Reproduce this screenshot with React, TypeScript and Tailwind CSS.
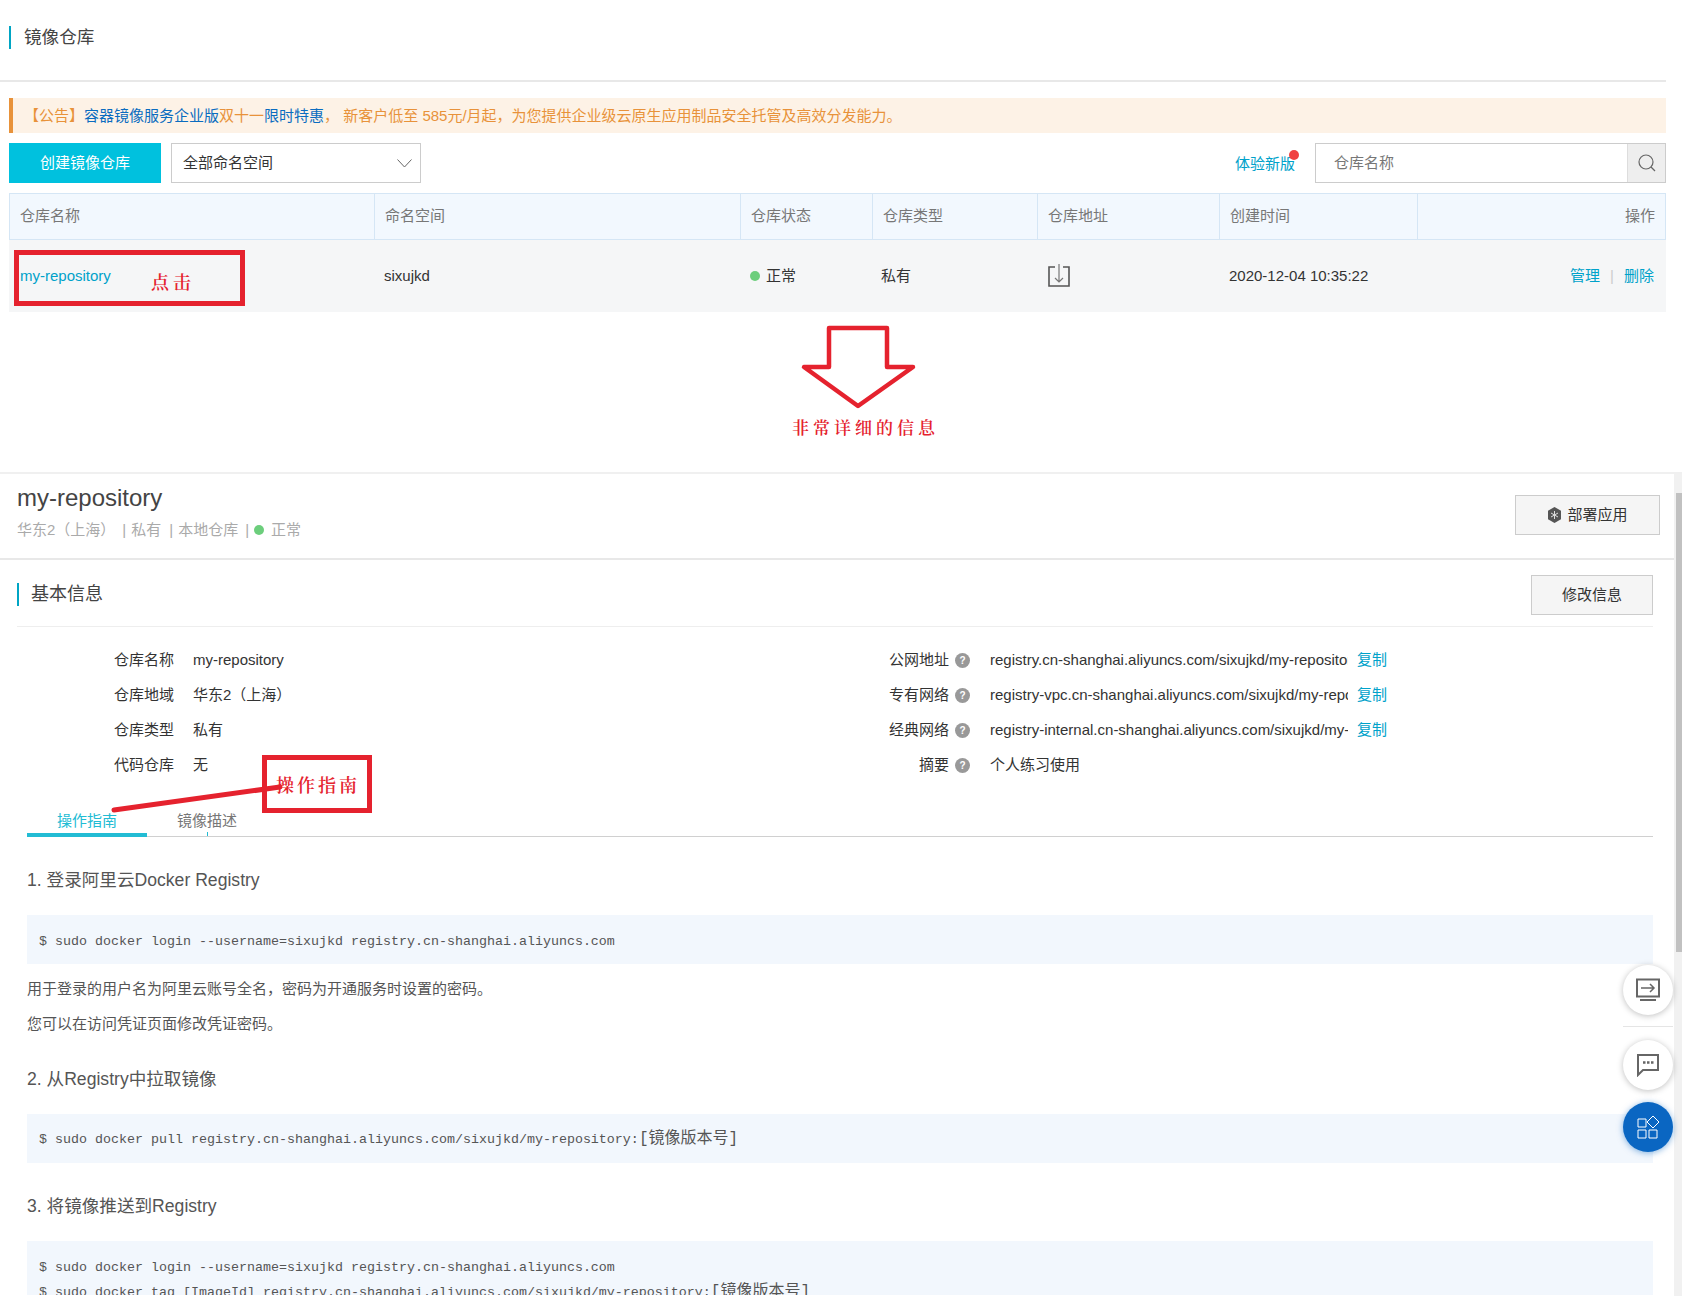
const sans = "font-['Liberation_Sans','Noto_Sans_CJK_SC',sans-serif]";

function HelpIcon() {
  return (
    <span className="flex h-[15px] w-[15px] items-center justify-center rounded-full bg-[#999] text-[10px] font-bold leading-none text-white">?</span>
  );
}

function InfoRow({ label, value, help, copy }: { label: string; value: string; help?: boolean; copy?: boolean }) {
  if (help) {
    return (
      <div className="flex h-[35px] items-center">
        <span className="w-[89px] text-right">{label}</span>
        <span className="ml-[6px] mr-[20px]"><HelpIcon /></span>
        <span className="w-[358px] overflow-hidden whitespace-nowrap">{value}</span>
        {copy && <span className="ml-[9px] text-[#00a2ca]">复制</span>}
      </div>
    );
  }
  return (
    <div className="flex h-[35px] items-center">
      <span className="w-[60px] text-right">{label}</span>
      <span className="ml-[19px]">{value}</span>
    </div>
  );
}

function Code({ children, className }: { children: React.ReactNode; className: string }) {
  return (
    <div className={`mt-[21px] overflow-hidden bg-[#f2f7fd] pl-[12px] font-['Liberation_Mono','Noto_Sans_CJK_SC',monospace] text-[13.33px] leading-[25px] text-[#555] ${className}`}>
      {children}
    </div>
  );
}

function Annotation({ children, className }: { children: React.ReactNode; className: string }) {
  return (
    <span className={`absolute font-['Liberation_Serif','Noto_Serif_CJK_SC',serif] font-semibold text-[#e5222e] ${className}`}>{children}</span>
  );
}

const columns = [
  { name: "仓库名称", w: "w-[365px]" },
  { name: "命名空间", w: "w-[366px]" },
  { name: "仓库状态", w: "w-[132px]" },
  { name: "仓库类型", w: "w-[165px]" },
  { name: "仓库地址", w: "w-[182px]" },
  { name: "创建时间", w: "w-[198px]" },
];

const tagText = "text-[16px]";

export default function App() {
  return (
    <div className={`relative h-[1310px] w-[1682px] overflow-hidden bg-white text-[15px] text-[#333] ${sans}`}>
      {/* Upper screenshot: repository list */}
      <div className="h-[472px] w-[1666px]">
        <div className="flex h-[82px] border-b-2 border-[#e8e8e8] pl-[9px] pt-[26px]">
          <div className="flex h-[23px] items-center border-l-2 border-[#00a5c4] pl-[13px] text-[17.6px] text-[#444]">镜像仓库</div>
        </div>

        <div className="ml-[9px] mt-[16px] flex h-[35px] items-center whitespace-nowrap border-l-4 border-[#e8923a] bg-[#fdf2e6] pl-[11px] pt-[1px] text-[#e8923a]">
          【公告】<span className="text-[#0a6cc0]">容器镜像服务企业版</span>双十一<span className="text-[#0a6cc0]">限时特惠</span>，&nbsp;新客户低至 585元/月起，为您提供企业级云原生应用制品安全托管及高效分发能力。
        </div>

        <div className="ml-[9px] mt-[10px] flex h-[40px] items-center">
          <div className="flex h-full w-[152px] items-center justify-center bg-[#00c1de] text-white">创建镜像仓库</div>
          <div className="ml-[10px] flex h-full w-[250px] items-center justify-between border border-[#ccc] pl-[11px] pr-[8px]">
            全部命名空间
            <svg width="15" height="9" viewBox="0 0 15 9" fill="none" stroke="#666" strokeWidth="1"><path d="M.5.5l7 7.5 7-7.5" /></svg>
          </div>
          <div className="relative ml-auto mr-[20px] pt-[2px] text-[#00a2ca]">
            体验新版
            <span className="absolute -right-[4px] -top-[1px] h-[10px] w-[10px] rounded-full bg-[#f04040]" />
          </div>
          <div className="flex h-full w-[351px] items-center border border-[#ccc]">
            <span className="flex-1 pl-[18px] text-[#777]">仓库名称</span>
            <span className="flex h-full w-[38px] items-center justify-center border-l border-[#ddd] bg-[#eee]">
              <svg width="20" height="20" viewBox="0 0 20 20" fill="none" stroke="#666" strokeWidth="1.2"><circle cx="9" cy="9" r="7" /><path d="M14 14l4 4" /></svg>
            </span>
          </div>
        </div>

        <div className="ml-[9px] mt-[10px] flex h-[47px] border border-[#d5e6f5] bg-[#f2f8fe] text-[#777]">
          {columns.map((c) => (
            <div key={c.name} className={`flex items-center border-r border-[#d5e6f5] pl-[10px] ${c.w}`}>{c.name}</div>
          ))}
          <div className="flex flex-1 items-center justify-end pr-[10px]">操作</div>
        </div>

        <div className="ml-[9px] flex h-[72px] items-center bg-[#f5f6f7]">
          <div className="w-[365px] pl-[11px] text-[#00a2ca]">my-repository</div>
          <div className="w-[366px] pl-[10px]">sixujkd</div>
          <div className="flex w-[132px] items-center pl-[10px]">
            <span className="mr-[6px] h-[10px] w-[10px] rounded-full bg-[#6cce7c]" />正常
          </div>
          <div className="w-[165px] pl-[9px]">私有</div>
          <div className="mb-[2px] w-[182px] pl-[11px]">
            <svg width="22" height="24" viewBox="0 0 22 24" fill="none" stroke="#555" strokeWidth="1.6">
              <path d="M7 4H1v19h20V4h-6" />
              <path d="M11 1v18M7 15l4 4 4-4" stroke="#777" strokeWidth="1.2" />
            </svg>
          </div>
          <div className="w-[198px] pl-[10px]">2020-12-04 10:35:22</div>
          <div className="flex flex-1 items-center justify-end pr-[12px] text-[#00a2ca]">
            管理<span className="mx-[10px] text-[#ccc]">|</span>删除
          </div>
        </div>
      </div>

      {/* Lower screenshot: repository detail */}
      <div className="flex h-[824px] border-t-2 border-[#f0f0f0]">
        <div className="w-[1674px]">
          <div className="flex h-[86px] items-start justify-between border-b-2 border-[#e8e8e8] pl-[17px] pr-[14px]">
            <div>
              <div className="mt-[8px] text-[24px] leading-[32px] text-[#444]">my-repository</div>
              <div className="mt-[5px] flex items-center text-[#aaa]">
                <span>华东2（上海）</span>
                <span className="ml-[7px]">|</span>
                <span className="ml-[5px]">私有</span>
                <span className="ml-[8px]">|</span>
                <span className="ml-[5px]">本地仓库</span>
                <span className="ml-[7px]">|</span>
                <span className="ml-[5px] mr-[7px] h-[10px] w-[10px] rounded-full bg-[#6cce7c]" />
                <span>正常</span>
              </div>
            </div>
            <div className="mt-[21px] flex h-[40px] w-[145px] items-center justify-center border border-[#ccc] bg-[#f5f5f5]">
              <svg className="mr-[5px]" width="15" height="16" viewBox="0 0 15 16" fill="#555"><path d="M7.5 0l6.5 3.7v8.6L7.5 16 1 12.3V3.7z" /><path d="M7.5 4v8M4 6l7 4M11 6l-7 4" stroke="#ddd" strokeWidth="1" /></svg>
              部署应用
            </div>
          </div>

          <div className="ml-[17px] mr-[21px] flex h-[67px] items-center justify-between border-b border-[#eee] pt-[3px]">
            <div className="flex h-[23px] items-center border-l-2 border-[#00a5c4] pl-[12px] text-[18px] text-[#444]">基本信息</div>
            <div className="flex h-[40px] w-[122px] items-center justify-center border border-[#ccc] bg-[#f5f5f5] pt-[1px]">修改信息</div>
          </div>

          <div className="ml-[41px] mt-[16px] flex h-[140px]">
            <div className="w-[819px] pl-[73px]">
              <InfoRow label="仓库名称" value="my-repository" />
              <InfoRow label="仓库地域" value="华东2（上海）" />
              <InfoRow label="仓库类型" value="私有" />
              <InfoRow label="代码仓库" value="无" />
            </div>
            <div>
              <InfoRow help copy label="公网地址" value="registry.cn-shanghai.aliyuncs.com/sixujkd/my-repository" />
              <InfoRow help copy label="专有网络" value="registry-vpc.cn-shanghai.aliyuncs.com/sixujkd/my-repository" />
              <InfoRow help copy label="经典网络" value="registry-internal.cn-shanghai.aliyuncs.com/sixujkd/my-repository" />
              <InfoRow help label="摘要" value="个人练习使用" />
            </div>
          </div>

          <div className="ml-[27px] mr-[21px] mt-[22px] flex h-[32px] border-b border-[#d0d0d0] text-[#777]">
            <div className="flex h-[32px] w-[120px] items-center justify-center border-b-4 border-[#22bcd4] pt-[4px] text-[#22bcd4]">操作指南</div>
            <div className="relative flex h-[31px] w-[120px] items-center justify-center pt-[1px]">
              镜像描述
              <span className="absolute bottom-0 left-[60px] h-[4px] w-px bg-[#22bcd4]" />
            </div>
          </div>

          <div className="ml-[27px] mr-[21px]">
            <h2 className="mt-[29px] text-[17.6px] leading-[28px] text-[#555]">1. 登录阿里云Docker Registry</h2>
            <Code className="h-[49px] pt-[14px]">
              <div className="whitespace-pre">$ sudo docker login --username=sixujkd registry.cn-shanghai.aliyuncs.com</div>
            </Code>
            <p className="mt-[15px] leading-[20px] text-[#555]">用于登录的用户名为阿里云账号全名，密码为开通服务时设置的密码。</p>
            <p className="mt-[15px] leading-[20px] text-[#555]">您可以在访问凭证页面修改凭证密码。</p>
            <h2 className="mt-[31px] text-[17.6px] leading-[28px] text-[#555]">2. 从Registry中拉取镜像</h2>
            <Code className="h-[49px] pt-[13px]">
              <div className="whitespace-pre">$ sudo docker pull registry.cn-shanghai.aliyuncs.com/sixujkd/my-repository:<span className={tagText}>[镜像版本号]</span></div>
            </Code>
            <h2 className="mt-[29px] text-[17.6px] leading-[28px] text-[#555]">3. 将镜像推送到Registry</h2>
            <Code className="h-[54px] pt-[14px]">
              <div className="whitespace-pre">$ sudo docker login --username=sixujkd registry.cn-shanghai.aliyuncs.com</div>
              <div className="whitespace-pre">$ sudo docker tag [ImageId] registry.cn-shanghai.aliyuncs.com/sixujkd/my-repository:<span className={tagText}>[镜像版本号]</span></div>
            </Code>
          </div>
        </div>
        <div className="w-[8px] bg-[#f1f1f1] pl-[2px] pt-[19px]">
          <div className="h-[459px] bg-[#c1c1c1]" />
        </div>
      </div>

      {/* Red annotations drawn over the screenshots */}
      <div className="absolute left-[14px] top-[250px] h-[56px] w-[231px] border-[5px] border-[#e5222e]" />
      <Annotation className="left-[151px] top-[270px] text-[18px] tracking-[4px]">点击</Annotation>
      <svg className="absolute left-[795px] top-[322px]" width="130" height="92" viewBox="0 0 130 92" fill="none" stroke="#e5222e" strokeWidth="4.5" strokeLinejoin="round">
        <path d="M34 6h58v39h26L63 84 9 45h25z" />
      </svg>
      <Annotation className="left-[792px] top-[416px] text-[17px] tracking-[4px]">非常详细的信息</Annotation>
      <div className="absolute left-[262px] top-[755px] h-[58px] w-[110px] border-[5px] border-[#e5222e]" />
      <svg className="absolute left-[110px] top-[782px]" width="175" height="32" viewBox="0 0 175 32" fill="none" stroke="#e5222e" strokeWidth="5" strokeLinecap="round"><path d="M4 28L170 5" /></svg>
      <Annotation className="left-[276px] top-[773px] text-[18px] tracking-[3px]">操作指南</Annotation>

      {/* Floating helpers */}
      <div className="absolute left-[1623px] top-[965px] flex h-[50px] w-[50px] items-center justify-center rounded-full bg-white shadow-[0_1px_6px_rgba(0,0,0,0.25)]">
        <svg width="26" height="24" viewBox="0 0 26 24" fill="none" stroke="#666" strokeWidth="1.5">
          <path d="M2 1.5h22v17H2z" strokeWidth="2" /><path d="M6 10h13M15 6l4 4-4 4" /><path d="M5 22h16" strokeWidth="2" />
        </svg>
      </div>
      <div className="absolute left-[1623px] top-[1026px] h-px w-[50px] bg-[#e5e5e5]" />
      <div className="absolute left-[1623px] top-[1040px] flex h-[50px] w-[50px] items-center justify-center rounded-full bg-white shadow-[0_1px_6px_rgba(0,0,0,0.25)]">
        <svg width="24" height="24" viewBox="0 0 24 24" fill="none" stroke="#666" strokeWidth="2">
          <path d="M2 2h20v15H7l-5 5z" /><path d="M7 9.5h2.5M11 9.5h2.5M15 9.5h2.5" strokeWidth="2.5" />
        </svg>
      </div>
      <div className="absolute left-[1623px] top-[1102px] flex h-[50px] w-[50px] items-center justify-center rounded-full bg-[#0a66c2] shadow-[0_1px_6px_rgba(10,102,194,0.5)]">
        <svg width="24" height="24" viewBox="0 0 24 24" fill="none" stroke="white" strokeWidth="1">
          <path d="M2 4h8v8H2zM2 15h8v8H2zM13 15h8v8h-8zM17 1l6 6-6 6-6-6z" />
        </svg>
      </div>
    </div>
  );
}
